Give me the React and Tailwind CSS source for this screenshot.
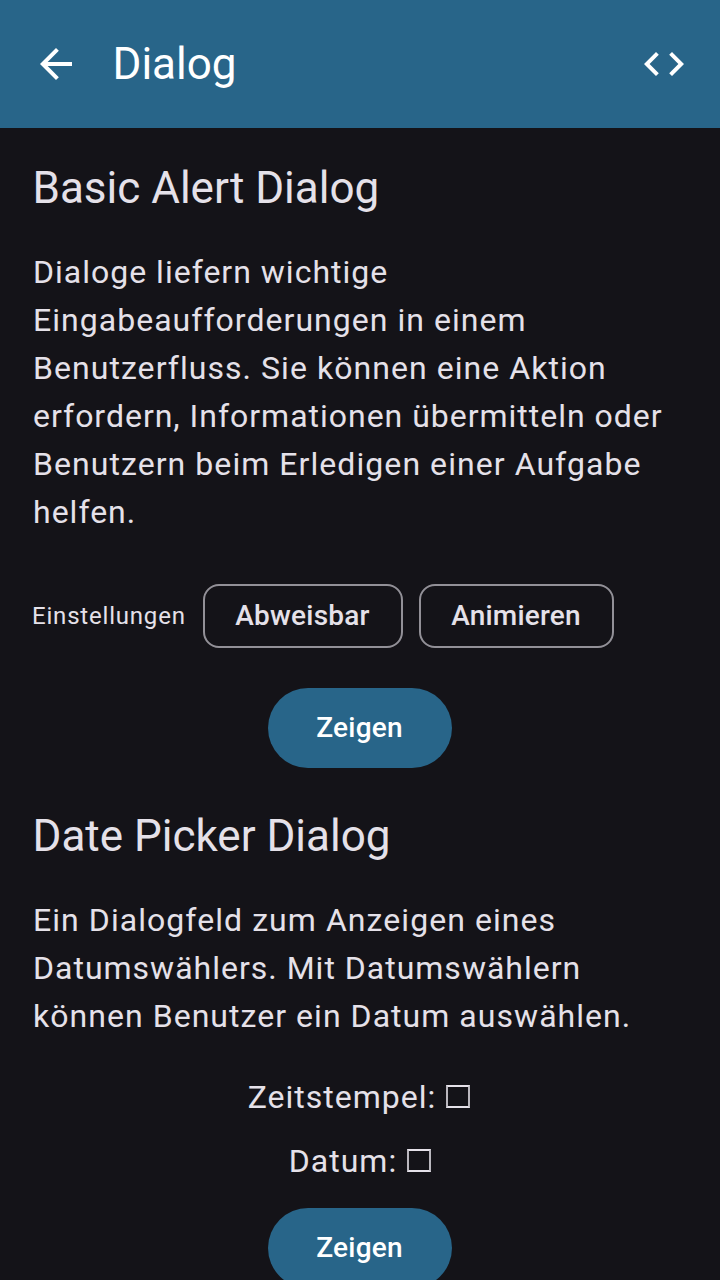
function Section({ title, className, children }) {
  return (
    <section className={className}>
      <h2 className="pl-[32.5px] text-[44px] leading-[56px] whitespace-nowrap">{title}</h2>
      <p className="mt-8 flex flex-col pl-[33px] text-[32px] leading-[48px] tracking-[1px] whitespace-nowrap">{children}</p>
    </section>
  );
}

function ShowButton() {
  return (
    <button className="mx-auto flex h-20 w-[184px] shrink-0 items-center justify-center rounded-full bg-[#286589] pr-px text-[28px] font-medium tracking-[0.2px] text-white">
      Zeigen
    </button>
  );
}

function ValueRow({ label, className }) {
  return (
    <div className={`flex items-center ${className}`}>
      {label}
      <span className="mb-[2px] ml-[10px] h-[23px] w-6 border-2 border-x-[#bab7be] border-y-[#e5e1e9]" />
    </div>
  );
}

export default function App() {
  return (
    <div className="flex h-[1280px] w-[720px] flex-col overflow-hidden bg-[#141318] font-['Roboto',sans-serif] text-[#e5e1e9]">
      <header className="flex h-32 shrink-0 items-center bg-[#286589] px-8 text-white">
        <svg className="size-12" viewBox="0 0 24 24" fill="currentColor">
          <path d="M20 11H7.83l5.59-5.59L12 4l-8 8 8 8 1.41-1.41L7.83 13H20v-2z" />
        </svg>
        <h1 className="ml-[32.5px] flex-1 text-[44px] leading-[56px]">Dialog</h1>
        <svg className="size-12" viewBox="0 0 24 24" fill="currentColor">
          <path d="M9.4 16.6 4.8 12l4.6-4.6L8 6l-6 6 6 6 1.4-1.4zm5.2 0 4.6-4.6-4.6-4.6L16 6l6 6-6 6-1.4-1.4z" />
        </svg>
      </header>
      <Section className="mt-8 shrink-0" title="Basic Alert Dialog">
        <span>Dialoge liefern wichtige</span>
        <span className="tracking-[1.03px]">Eingabeaufforderungen in einem</span>
        <span className="tracking-[1.05px]">Benutzerfluss. Sie können eine Aktion</span>
        <span className="tracking-[0.985px]">erfordern, Informationen übermitteln oder</span>
        <span className="tracking-[1.06px]">Benutzern beim Erledigen einer Aufgabe</span>
        <span>helfen.</span>
      </Section>
      <div className="mt-12 flex h-16 shrink-0 items-center pl-8">
        <span className="w-[171px] text-[24px] leading-8 tracking-[0.8px]">Einstellungen</span>
        <button className="h-16 w-[200px] rounded-2xl border-2 border-[#929097] pr-px text-[28px] font-medium tracking-[0.23px]">Abweisbar</button>
        <button className="ml-4 h-16 w-[195px] rounded-2xl border-2 border-[#929097] pr-px text-[28px] font-medium tracking-[0.2px]">Animieren</button>
      </div>
      <div className="mt-10 shrink-0"><ShowButton /></div>
      <Section className="mt-10 shrink-0" title="Date Picker Dialog">
        <span className="tracking-[1.06px]">Ein Dialogfeld zum Anzeigen eines</span>
        <span>Datumswählers. Mit Datumswählern</span>
        <span className="tracking-[1.04px]">können Benutzer ein Datum auswählen.</span>
      </Section>
      <div className="mt-[33px] flex shrink-0 flex-col items-center gap-4 text-[32px] leading-[48px] tracking-[1px]">
        <ValueRow label="Zeitstempel:" className="pr-[2px]" />
        <ValueRow label="Datum:" className="pr-0" />
      </div>
      <div className="mt-[23px] shrink-0"><ShowButton /></div>
    </div>
  );
}
